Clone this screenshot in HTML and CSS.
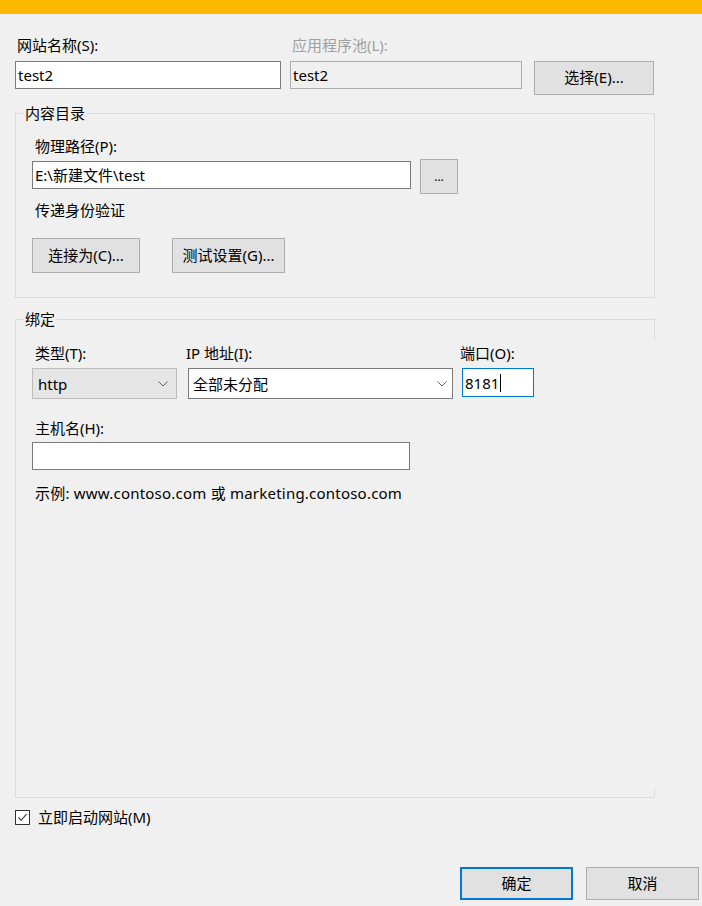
FILE: index.html
```html
<!DOCTYPE html>
<html lang="zh-CN">
<head>
<meta charset="utf-8">
<title>添加网站</title>
<link rel="stylesheet" href="styles.css">
</head>
<body>
<div class="titlebar"></div>
<div class="dialog">
  <div class="top-grid">
    <div class="lbl">网站名称(S):</div>
    <div class="lbl disabled">应用程序池(L):</div>
    <div></div>
    <div class="textbox">test2</div>
    <div class="textbox readonly">test2</div>
    <button class="btn btn-select">选择(E)...</button>
  </div>

  <fieldset class="group content-group">
    <legend>内容目录</legend>
    <div class="group-body">
      <div class="lbl">物理路径(P):</div>
      <div class="path-row">
        <div class="textbox path-input">E:\新建文件\test</div>
        <button class="btn btn-browse">...</button>
      </div>
      <div class="lbl pass">传递身份验证</div>
      <div class="btn-row">
        <button class="btn btn-connect">连接为(C)...</button>
        <button class="btn btn-test">测试设置(G)...</button>
      </div>
    </div>
  </fieldset>

  <fieldset class="group binding-group">
    <legend>绑定</legend>
    <div class="group-body">
      <div class="bind-row">
        <div class="col col-type">
          <div class="lbl">类型(T):</div>
          <div class="combo combo-type"><span>http</span>
            <svg class="chev" viewBox="0 0 10 6"><polyline points="0.5,0.5 5,5 9.5,0.5" fill="none" stroke="#606060" stroke-width="1"/></svg>
          </div>
        </div>
        <div class="col col-ip">
          <div class="lbl lbl-tight">IP 地址(I):</div>
          <div class="combo combo-ip"><span>全部未分配</span>
            <svg class="chev" viewBox="0 0 10 6"><polyline points="0.5,0.5 5,5 9.5,0.5" fill="none" stroke="#606060" stroke-width="1"/></svg>
          </div>
        </div>
        <div class="col col-port">
          <div class="lbl lbl-tight">端口(O):</div>
          <div class="textbox port-input"><span>8181</span><span class="caret"></span></div>
        </div>
      </div>
      <div class="lbl host-lbl">主机名(H):</div>
      <div class="textbox host-input"></div>
      <div class="lbl example">示例: www.contoso.com 或 marketing.contoso.com</div>
    </div>
  </fieldset>

  <div class="check-row">
    <span class="checkbox"><svg viewBox="0 0 13 13"><polyline points="2.5,6.5 5.2,9.3 10.5,3.2" fill="none" stroke="#333" stroke-width="1.1"/></svg></span>
    <span>立即启动网站(M)</span>
  </div>

  <div class="action-row">
    <button class="btn btn-ok">确定</button>
    <button class="btn btn-cancel">取消</button>
  </div>
</div>
</body>
</html>
```
FILE: styles.css
```css
html, body {
  margin: 0;
  padding: 0;
}
body {
  background: #f0f0f0;
  font-family: "Noto Sans", "Noto Sans CJK SC", sans-serif;
  font-size: 15px;
  color: #000;
  width: 702px;
  height: 906px;
  overflow: hidden;
}

.titlebar {
  height: 14px;
  background: #ffb900;
}

.dialog {
  padding: 21px 0 0 15px;
}

.lbl {
  line-height: 20px;
  padding-left: 2px;
  white-space: nowrap;
}
.lbl.disabled {
  color: #a0a0a0;
}

.textbox {
  box-sizing: border-box;
  height: 28px;
  border: 1px solid #7a7a7a;
  background: #fff;
  padding: 0 2px;
  line-height: 26px;
  white-space: nowrap;
  overflow: hidden;
}
.textbox.readonly {
  background: #f0f0f0;
  border-color: #adadad;
}

.btn {
  font: inherit;
  font-size: 15px;
  color: #000;
  background: #e1e1e1;
  border: 1px solid #adadad;
  box-sizing: border-box;
  padding: 0 0 3px 0;
  margin: 0;
}

.top-grid {
  display: grid;
  grid-template-columns: 266px 232px 123px;
  grid-template-rows: 20px auto;
  column-gap: 9px;
  row-gap: 6px;
  align-items: start;
}
.btn-select {
  justify-self: end;
  width: 120px;
  height: 34px;
}

fieldset.group {
  margin: 8px 0 0 0;
  width: 640px;
  box-sizing: border-box;
  border: 1px solid #dadada;
  padding: 13px 0 24px 7px;
  min-width: 0;
}
fieldset.group legend {
  padding: 0 2px;
  line-height: 20px;
}
.group-body {
  padding-left: 9px;
}
.group-body .lbl {
  padding-left: 3px;
}
.group-body .lbl.lbl-tight {
  padding-left: 0;
  margin-left: -2px;
}

.path-row {
  display: flex;
  align-items: flex-start;
  margin-top: 5px;
}
.path-input {
  width: 379px;
}
.btn-browse {
  width: 38px;
  height: 35px;
  margin-left: 9px;
  margin-top: -2px;
  font-size: 12px;
  padding-bottom: 0;
}
.lbl.pass {
  margin-top: 6px;
}
.btn-row {
  display: flex;
  gap: 32px;
  margin-top: 18px;
}
.btn-connect {
  width: 108px;
  height: 35px;
}
.btn-test {
  width: 113px;
  height: 35px;
}

fieldset.binding-group {
  margin-top: 11px;
  height: 489px;
  padding-top: 14px;
  border-right-color: transparent;
  position: relative;
}
fieldset.binding-group::before,
fieldset.binding-group::after {
  content: "";
  position: absolute;
  right: -1px;
  width: 1px;
  background: #dadada;
}
fieldset.binding-group::before {
  bottom: 457px;
  height: 22px;
}
fieldset.binding-group::after {
  bottom: 0;
  height: 8px;
}

.bind-row {
  display: flex;
  align-items: flex-start;
}
.col {
  display: flex;
  flex-direction: column;
  gap: 5px;
}
.col-type { width: 145px; }
.col-ip { width: 265px; margin-left: 11px; }
.col-port { width: 72px; margin-left: 9px; }

.combo {
  box-sizing: border-box;
  height: 31px;
  display: flex;
  align-items: center;
  justify-content: space-between;
  white-space: nowrap;
}
.combo-type {
  background: #e5e5e5;
  border: 1px solid #bcbcbc;
  padding: 0 8px 0 5px;
}
.combo-ip {
  background: #fff;
  border: 1px solid #7a7a7a;
  padding: 0 5px 0 4px;
}
.chev {
  width: 10px;
  height: 6px;
}

.port-input {
  height: 29px;
  border-color: #0078d7;
  display: flex;
  align-items: center;
}
.caret {
  display: inline-block;
  width: 1px;
  height: 18px;
  background: #000;
  margin-left: 1px;
}

.lbl.host-lbl {
  margin-top: 19px;
}
.host-input {
  width: 378px;
  margin-top: 4px;
}
.lbl.example {
  margin-top: 13px;
  letter-spacing: 0.22px;
}

.check-row {
  display: flex;
  align-items: center;
  gap: 8px;
  margin-top: 9px;
  line-height: 20px;
}
.checkbox {
  box-sizing: border-box;
  width: 15px;
  height: 15px;
  border: 1px solid #333;
  background: #fff;
  display: flex;
}
.checkbox svg {
  width: 13px;
  height: 13px;
}

.action-row {
  display: flex;
  justify-content: flex-end;
  gap: 13px;
  margin-top: 40px;
  padding-right: 3px;
}
.btn-ok {
  width: 113px;
  height: 33px;
  border: 2px solid #0078d7;
}
.btn-cancel {
  width: 113px;
  height: 33px;
}
```
